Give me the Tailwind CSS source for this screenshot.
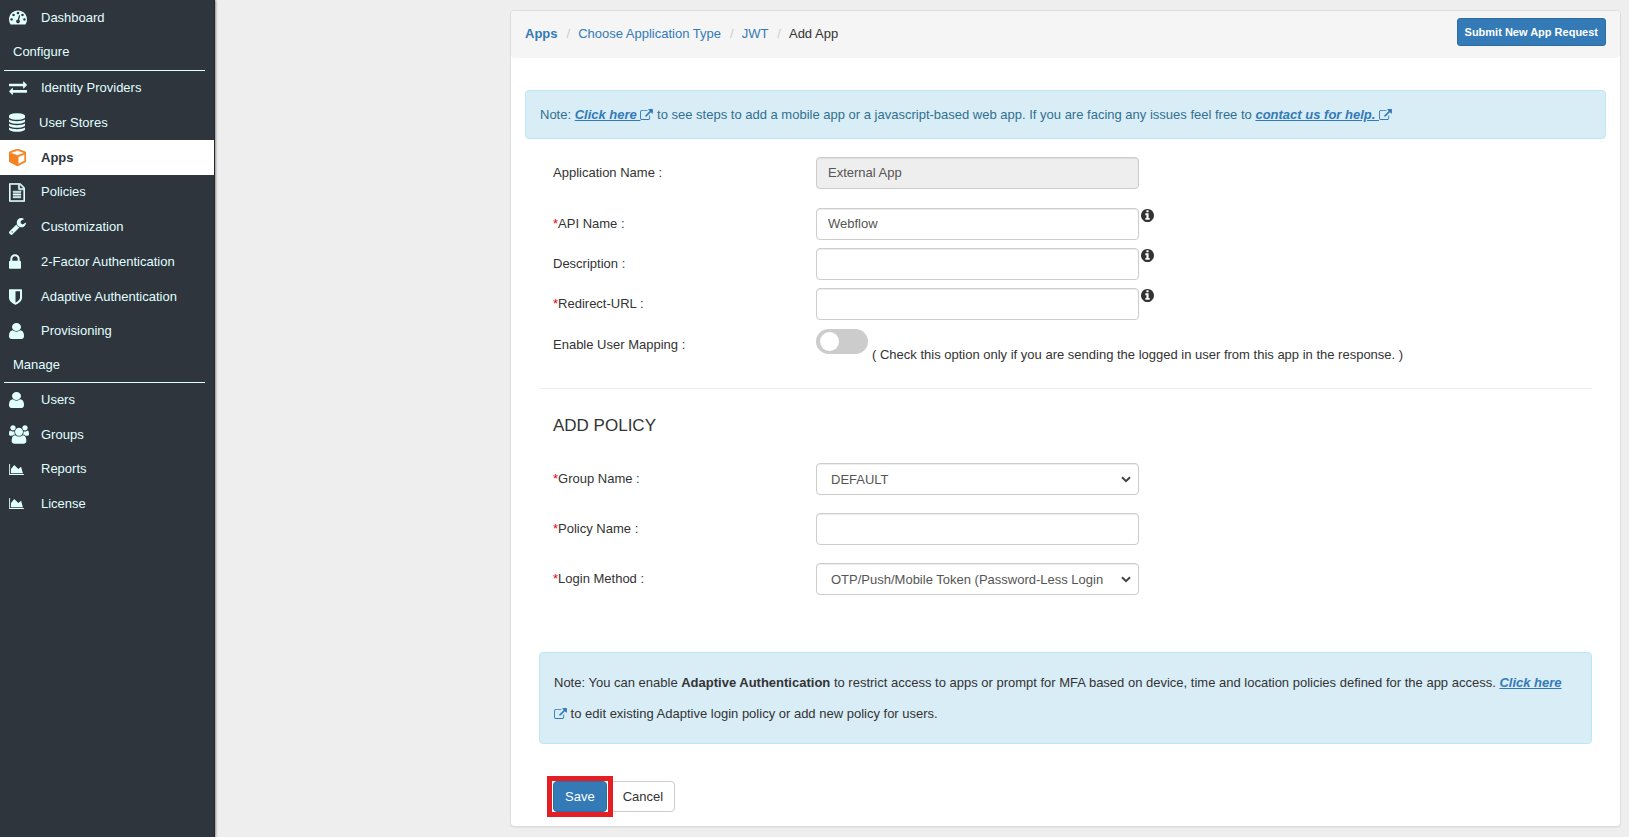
<!DOCTYPE html>
<html lang="en">
<head>
  <meta charset="UTF-8" />
  <meta name="viewport" content="width=device-width, initial-scale=1" />
  <title>Add App</title>
  <script src="https://cdn.jsdelivr.net/npm/@tailwindcss/browser@4"></script>
</head>
<body class="bg-[#eee] min-h-screen flex font-['Liberation_Sans',Arial,sans-serif] text-[13px] text-[#333]">

  <!-- icon sprite -->
  <svg class="hidden">
    <symbol id="i-dashboard" viewBox="0 256 1792 1408"><path d="M384 1152q0-53-37.5-90.5t-90.5-37.5-90.5 37.5-37.5 90.5 37.5 90.5 90.5 37.5 90.5-37.5 37.5-90.5zm192-448q0-53-37.5-90.5t-90.5-37.5-90.5 37.5-37.5 90.5 37.5 90.5 90.5 37.5 90.5-37.5 37.5-90.5zm428 481l101-382q6-26-7.5-48.5t-38.5-29.5-48 6.5-30 39.5l-101 382q-60 5-107 43.5t-63 98.5q-20 77 20 146t117 89 146-20 89-117q16-60-6-117t-72-91zm660-33q0-53-37.5-90.5t-90.5-37.5-90.5 37.5-37.5 90.5 37.5 90.5 90.5 37.5 90.5-37.5 37.5-90.5zm-640-640q0-53-37.5-90.5t-90.5-37.5-90.5 37.5-37.5 90.5 37.5 90.5 90.5 37.5 90.5-37.5 37.5-90.5zm448 192q0-53-37.5-90.5t-90.5-37.5-90.5 37.5-37.5 90.5 37.5 90.5 90.5 37.5 90.5-37.5 37.5-90.5zm320 448q0 261-141 483-19 29-54 29h-1402q-35 0-54-29-141-221-141-483 0-182 71-348t191-286 286-191 348-71 348 71 286 191 191 286 71 348z"/></symbol>
    <symbol id="i-exchange" viewBox="0 256 1792 1376"><path d="M1792 1184v192q0 13-9.500 22.500t-22.500 9.500h-1376v192q0 13-9.500 22.500t-22.500 9.500q-12 0-24-10l-319-320q-9-9-9-22 0-14 9-23l320-320q9-9 23-9 13 0 22.500 9.500t9.500 22.500v192h1376q13 0 22.500 9.500t9.500 22.500zm0-544q0 14-9 23l-320 320q-9 9-23 9-13 0-22.500-9.500t-9.500-22.500v-192h-1376q-13 0-22.500-9.500t-9.500-22.500v-192q0-13 9.500-22.500t22.500-9.500h1376v-192q0-14 9-23t23-9q12 0 24 10l319 319q9 9 9 23z"/></symbol>
    <symbol id="i-database" viewBox="128 0 1536 1792"><path d="M896 768q237 0 443-43t325-127v170q0 69-103 128t-280 93.500-385 34.500-385-34.500-280-93.500-103-128v-170q119 84 325 127t443 43zm0 768q237 0 443-43t325-127v170q0 69-103 128t-280 93.500-385 34.500-385-34.500-280-93.500-103-128v-170q119 84 325 127t443 43zm0-384q237 0 443-43t325-127v170q0 69-103 128t-280 93.500-385 34.500-385-34.500-280-93.500-103-128v-170q119 84 325 127t443 43zm0-1152q208 0 385 34.500t280 93.500 103 128v128q0 69-103 128t-280 93.500-385 34.500-385-34.500-280-93.500-103-128v-128q0-69 103-128t280-93.500 385-34.500z"/></symbol>
    <symbol id="i-cube" viewBox="0 128 1664 1664"><path d="M896 1629l640-349v-636l-640 233v752zm-64-865l698-254-698-254-698 254zm832-252v768q0 35-18 65t-49 47l-704 384q-28 16-61 16t-61-16l-704-384q-31-17-49-47t-18-65v-768q0-40 23-73t61-47l704-256q22-8 44-8t44 8l704 256q38 14 61 47t23 73z" stroke="#f58220" stroke-width="60"/></symbol>
    <symbol id="i-file" viewBox="128 0 1536 1792"><path d="M1596 380q28 28 48 76t20 88v1152q0 40-28 68t-68 28h-1344q-40 0-68-28t-28-68v-1600q0-40 28-68t68-28h896q40 0 88 20t76 48zm-444-244v376h376q-10-29-22-41l-313-313q-12-12-41-22zm384 1528v-1024h-416q-40 0-68-28t-28-68v-416h-768v1536h1280zm-1024-864q0-14 9-23t23-9h704q14 0 23 9t9 23v64q0 14-9 23t-23 9h-704q-14 0-23-9t-9-23v-64zm736 224q14 0 23 9t9 23v64q0 14-9 23t-23 9h-704q-14 0-23-9t-9-23v-64q0-14 9-23t23-9h704zm0 256q14 0 23 9t9 23v64q0 14-9 23t-23 9h-704q-14 0-23-9t-9-23v-64q0-14 9-23t23-9h704z" stroke="currentColor" stroke-width="50"/></symbol>
    <symbol id="i-wrench" viewBox="84 128 1644 1644"><path d="M448 1472q0-26-19-45t-45-19-45 19-19 45 19 45 45 19 45-19 19-45zm644-420l-682 682q-37 37-90 37-52 0-91-37l-106-108q-38-36-38-90 0-53 38-91l681-681q39 98 114.500 173.500t173.500 114.500zm634-435q0 39-23 106-47 134-164.500 217.500t-258.500 83.500q-185 0-316.500-131.500t-131.500-316.500 131.500-316.500 316.500-131.500q58 0 121.500 16.500t107.500 46.500q16 11 16 28t-16 28l-293 169v224l193 107q5-3 79-48.500t135.500-81 70.500-35.500q15 0 23.500 10t8.500 25z"/></symbol>
    <symbol id="i-lock" viewBox="320 128 1152 1408"><path d="M640 768h512v-192q0-106-75-181t-181-75-181 75-75 181v192zm832 96v576q0 40-28 68t-68 28h-960q-40 0-68-28t-28-68v-576q0-40 28-68t68-28h32v-192q0-184 132-316t316-132 316 132 132 316v192h32q40 0 68 28t28 68z"/></symbol>
    <symbol id="i-shield" viewBox="256 128 1280 1536"><path d="M1344 960v-640h-448v1137q119-63 213-137 235-184 235-360zm192-768v768q0 86-33.500 170.500t-83 150-118 127.500-126.500 103-121 77.500-89.500 49.500-42.500 20q-12 6-26 6t-26-6q-16-7-42.500-20t-89.500-49.500-121-77.500-126.500-103-118-127.500-83-150-33.500-170.500v-768q0-26 19-45t45-19h1152q26 0 45 19t19 45z"/></symbol>
    <symbol id="i-user" viewBox="256 128 1280 1536" preserveAspectRatio="none"><path d="M1536 1399q0 109-62.500 187t-150.500 78h-854q-88 0-150.500-78t-62.500-187q0-85 8.500-160.500t31.500-152 58.500-131 94-89 134.500-34.500q131 128 313 128t313-128q76 0 134.500 34.500t94 89 58.500 131 31.500 152 8.500 160.500zm-256-887q0 159-112.500 271.500t-271.500 112.500-271.500-112.500-112.500-271.500 112.500-271.500 271.500-112.500 271.500 112.500 112.500 271.500z"/></symbol>
    <symbol id="i-users" viewBox="-64 0 1920 1792"><path d="M529 896q-162 5-265 128h-134q-82 0-138-40.500t-56-118.500q0-353 124-353 6 0 43.500 21t97.500 42.500 119 21.500q67 0 133-23-5 37-5 66 0 159 81 256zm1071 637q0 120-73 189.500t-194 69.500h-874q-121 0-194-69.500t-73-189.500q0-53 3.500-103.500t14-109 26.500-108.500 43-97.500 62-81 85.500-53.500 111.500-20q10 0 43 21.500t73 48 107 48 135 21.500 135-21.500 107-48 73-48 43-21.500q61 0 111.500 20t85.500 53.500 62 81 43 97.500 26.500 108.500 14 109 3.500 103.500zm-1024-1277q0 106-75 181t-181 75-181-75-75-181 75-181 181-75 181 75 75 181zm704 384q0 159-112.500 271.500t-271.500 112.500-271.500-112.500-112.500-271.500 112.500-271.500 271.500-112.500 271.500 112.500 112.500 271.500zm576 225q0 78-56 118.500t-138 40.500h-134q-103-123-265-128 81-97 81-256 0-29-5-66 66 23 133 23 59 0 119-21.500t97.500-42.500 43.500-21q124 0 124 353zm-128-609q0 106-75 181t-181 75-181-75-75-181 75-181 181-75 181 75 75 181z"/></symbol>
    <symbol id="i-chart" viewBox="0 128 2048 1536"><path d="M2048 1536v128h-2048v-1536h128v1408h1920zm-384-1024l256 896h-1664v-576l448-576 576 576z"/></symbol>
    <symbol id="i-external" viewBox="0 0 1792 1536"><path d="M1408 928v320q0 119-84.500 203.500t-203.500 84.500h-832q-119 0-203.500-84.500t-84.500-203.500v-832q0-119 84.500-203.500t203.500-84.500h704q14 0 23 9t9 23v64q0 14-9 23t-23 9h-704q-66 0-113 47t-47 113v832q0 66 47 113t113 47h832q66 0 113-47t47-113v-320q0-14 9-23t23-9h64q14 0 23 9t9 23zm384-864v512q0 26-19 45t-45 19-45-19l-176-176-652 652q-10 10-23 10t-23-10l-114-114q-10-10-10-23t10-23l652-652-176-176q-19-19-19-45t19-45 45-19h512q26 0 45 19t19 45z"/></symbol>
    <symbol id="i-info" viewBox="128 128 1536 1536"><path d="M1152 1376v-160q0-14-9-23t-23-9h-96v-512q0-14-9-23t-23-9h-320q-14 0-23 9t-9 23v160q0 14 9 23t23 9h96v320h-96q-14 0-23 9t-9 23v160q0 14 9 23t23 9h448q14 0 23-9t9-23zm-128-896v-160q0-14-9-23t-23-9h-192q-14 0-23 9t-9 23v160q0 14 9 23t23 9h192q14 0 23-9t9-23zm640 416q0 209-103 385.500t-279.500 279.500-385.500 103-385.500-103-279.500-279.500-103-385.500 103-385.500 279.500-279.500 385.500-103 385.500 103 279.500 279.500 103 385.500z"/></symbol>
    <symbol id="i-caret" viewBox="0 0 10 7"><path d="M1 1.200l4 4 4-4" fill="none" stroke="#444" stroke-width="2"/></symbol>
  </svg>

  <aside class="w-[215px] shrink-0 bg-[#2e353d] text-[#e1ffff] fill-[#e1ffff] border-r border-[#23282e] shadow-[1px_0_2px_rgba(0,0,0,0.4)]">
    <nav>
      <a href="#" class="flex items-center h-[35px] pl-[9px]"><span class="w-8"><svg class="w-[18px] h-[15px]"><use href="#i-dashboard"/></svg></span>Dashboard</a>

      <h2 class="h-9 leading-[34px] ml-1 mr-[9px] pl-[9px] border-b border-[#e1ffff]">Configure</h2>
      <a href="#" class="flex items-center h-[34px] pl-[9px]"><span class="w-8"><svg class="w-[18px] h-[14px]"><use href="#i-exchange"/></svg></span>Identity Providers</a>
      <a href="#" class="flex items-center h-[35px] pl-[9px]"><span class="w-[30px]"><svg class="w-4 h-[19px]"><use href="#i-database"/></svg></span>User Stores</a>
      <a href="#" class="flex items-center h-[35px] pl-[9px] bg-white text-[#2e353d] font-bold"><span class="w-8"><svg class="w-[17px] h-[17px] fill-[#f58220]"><use href="#i-cube"/></svg></span>Apps</a>
      <a href="#" class="flex items-center h-[34px] pl-[9px]"><span class="w-8"><svg class="w-4 h-[19px]"><use href="#i-file"/></svg></span>Policies</a>
      <a href="#" class="flex items-center h-[35px] pl-[9px]"><span class="w-8"><svg class="w-[17px] h-[17px]"><use href="#i-wrench"/></svg></span>Customization</a>
      <a href="#" class="flex items-center h-[35px] pl-[9px]"><span class="w-8"><svg class="w-3 h-[15px]"><use href="#i-lock"/></svg></span>2-Factor Authentication</a>
      <a href="#" class="flex items-center h-[35px] pl-[9px]"><span class="w-8"><svg class="w-[13px] h-4"><use href="#i-shield"/></svg></span>Adaptive Authentication</a>
      <a href="#" class="flex items-center h-[34px] pl-[9px]"><span class="w-8"><svg class="w-[15px] h-4"><use href="#i-user"/></svg></span>Provisioning</a>

      <h2 class="h-[35px] leading-[34px] ml-1 mr-[9px] pl-[9px] border-b border-[#e1ffff]">Manage</h2>
      <a href="#" class="flex items-center h-[34px] pl-[9px]"><span class="w-8"><svg class="w-[15px] h-4"><use href="#i-user"/></svg></span>Users</a>
      <a href="#" class="flex items-center h-[35px] pl-[9px]"><span class="w-8"><svg class="w-5 h-[19px]"><use href="#i-users"/></svg></span>Groups</a>
      <a href="#" class="flex items-center h-[34px] pl-[9px]"><span class="w-8"><svg class="w-[15px] h-[11px]"><use href="#i-chart"/></svg></span>Reports</a>
      <a href="#" class="flex items-center h-[35px] pl-[9px]"><span class="w-8"><svg class="w-[15px] h-[11px]"><use href="#i-chart"/></svg></span>License</a>
    </nav>
  </aside>

  <main class="flex-1 pl-[295px] pr-2 py-[10px]">
    <div class="bg-white border border-[#ddd] rounded shadow-[0_1px_1px_rgba(0,0,0,0.05)]">

      <header class="flex items-start justify-between h-[47px] px-[14px] bg-[#f5f5f5] rounded">
        <ol class="flex pt-[14px] leading-[18px]">
          <li><a href="#" class="text-[#337ab7] font-bold">Apps</a></li>
          <li><span class="pl-[9px] pr-2 text-[#ccc]">/</span><a href="#" class="text-[#337ab7]">Choose Application Type</a></li>
          <li><span class="pl-[9px] pr-2 text-[#ccc]">/</span><a href="#" class="text-[#337ab7]">JWT</a></li>
          <li><span class="pl-[9px] pr-2 text-[#ccc]">/</span>Add App</li>
        </ol>
        <button type="button" class="mt-[7px] h-7 px-[7px] bg-[#337ab7] border border-[#2e6da4] rounded-[3px] text-white text-[11px] font-bold">Submit New App Request</button>
      </header>

      <div class="mt-8 mx-[14px] p-[14px] leading-[19px] bg-[#d9edf7] border border-[#bce8f1] rounded text-[#31708f]">
        Note: <a href="#" class="text-[#337ab7] font-bold italic underline">Click here <svg class="inline-block w-[13px] h-[11px] align-[-1px] fill-[#337ab7]"><use href="#i-external"/></svg></a> to see steps to add a mobile app or a javascript-based web app. If you are facing any issues feel free to <a href="#" class="text-[#337ab7] font-bold italic underline">contact us for help. <svg class="inline-block w-[13px] h-[11px] align-[-1px] fill-[#337ab7]"><use href="#i-external"/></svg></a>
      </div>

      <form class="mt-[18px] mx-7 pb-[14px]">
        <div class="grid grid-cols-[263px_1fr] px-[14px] leading-8">
          <label for="appName">Application Name :</label>
          <div class="mb-[19px] flex">
            <input id="appName" type="text" value="External App" disabled class="w-[323px] h-8 px-[11px] bg-[#eee] border border-[#ccc] rounded text-[#555] shadow-[inset_0_1px_1px_rgba(0,0,0,0.075)]" />
          </div>

          <label for="apiName"><span class="text-red-600">*</span>API Name :</label>
          <div class="mb-2 flex gap-[2px]">
            <input id="apiName" type="text" value="Webflow" class="w-[323px] h-8 px-[11px] bg-white border border-[#ccc] rounded text-[#555] shadow-[inset_0_1px_1px_rgba(0,0,0,0.075)]" />
            <svg class="w-[13px] h-[13px] mt-px fill-[#333]"><use href="#i-info"/></svg>
          </div>

          <label for="description">Description :</label>
          <div class="mb-2 flex gap-[2px]">
            <input id="description" type="text" class="w-[323px] h-8 px-[11px] bg-white border border-[#ccc] rounded text-[#555] shadow-[inset_0_1px_1px_rgba(0,0,0,0.075)]" />
            <svg class="w-[13px] h-[13px] mt-px fill-[#333]"><use href="#i-info"/></svg>
          </div>

          <label for="redirectUrl"><span class="text-red-600">*</span>Redirect-URL :</label>
          <div class="mb-[9px] flex gap-[2px]">
            <input id="redirectUrl" type="text" class="w-[323px] h-8 px-[11px] bg-white border border-[#ccc] rounded text-[#555] shadow-[inset_0_1px_1px_rgba(0,0,0,0.075)]" />
            <svg class="w-[13px] h-[13px] mt-px fill-[#333]"><use href="#i-info"/></svg>
          </div>

          <label for="userMapping">Enable User Mapping :</label>
          <div class="flex gap-1">
            <input id="userMapping" type="checkbox" class="appearance-none flex items-center shrink-0 w-[52px] h-[25px] px-1 rounded-full bg-[#ccc] checked:bg-[#337ab7] checked:justify-end before:block before:w-[19px] before:h-[19px] before:rounded-full before:bg-white" />
            <span class="pt-[17px] leading-[18px]">( Check this option only if you are sending the logged in user from this app in the response. )</span>
          </div>
        </div>

        <hr class="mt-6 border-[#eee]" />

        <h3 class="mt-[25px] mb-[25px] px-[14px] text-[17px] leading-6">ADD POLICY</h3>

        <div class="grid grid-cols-[263px_323px] gap-y-[18px] px-[14px] leading-8">
          <label for="groupName"><span class="text-red-600">*</span>Group Name :</label>
          <div class="relative">
            <select id="groupName" class="appearance-none block w-full h-8 pl-[14px] pr-[35px] bg-white border border-[#ccc] rounded text-[#555] shadow-[inset_0_1px_1px_rgba(0,0,0,0.075)]">
              <option>DEFAULT</option>
            </select>
            <svg class="absolute right-2 top-[13px] w-[10px] h-[7px] pointer-events-none"><use href="#i-caret"/></svg>
          </div>

          <label for="policyName"><span class="text-red-600">*</span>Policy Name :</label>
          <input id="policyName" type="text" class="h-8 px-[11px] bg-white border border-[#ccc] rounded text-[#555] shadow-[inset_0_1px_1px_rgba(0,0,0,0.075)]" />

          <label for="loginMethod"><span class="text-red-600">*</span>Login Method :</label>
          <div class="relative">
            <select id="loginMethod" class="appearance-none block w-full h-8 pl-[14px] pr-[35px] bg-white border border-[#ccc] rounded text-[#555] shadow-[inset_0_1px_1px_rgba(0,0,0,0.075)]">
              <option>OTP/Push/Mobile Token (Password-Less Login)</option>
            </select>
            <svg class="absolute right-2 top-[13px] w-[10px] h-[7px] pointer-events-none"><use href="#i-caret"/></svg>
          </div>
        </div>

        <div class="mt-[57px] p-[14px] leading-[31px] bg-[#d9edf7] border border-[#bce8f1] rounded">
          Note: You can enable <b>Adaptive Authentication</b> to restrict access to apps or prompt for MFA based on device, time and location policies defined for the app access. <a href="#" class="text-[#337ab7] font-bold italic underline">Click here <svg class="inline-block w-[13px] h-[11px] align-[-1px] fill-[#337ab7]"><use href="#i-external"/></svg></a> to edit existing Adaptive login policy or add new policy for users.
        </div>

        <div class="mt-[37px] px-[14px] flex gap-1">
          <div class="relative z-10">
            <button type="submit" class="block h-[31px] px-[11px] bg-[#337ab7] border border-[#2e6da4] rounded text-white">Save</button>
            <!-- highlight frame -->
            <span class="absolute -inset-x-[6px] -inset-y-[5px] border-[5px] border-[#e31e25] pointer-events-none"></span>
          </div>
          <button type="button" class="h-[31px] px-[11px] bg-white border border-[#ccc] rounded">Cancel</button>
        </div>
      </form>
    </div>
  </main>
</body>
</html>
